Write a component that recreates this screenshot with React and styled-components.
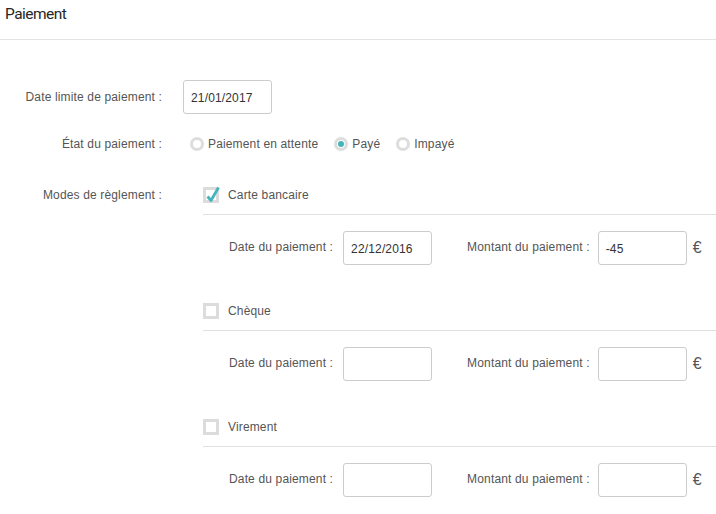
import React from "react";
import styled, { createGlobalStyle } from "styled-components";

const Global = createGlobalStyle`
  html, body { margin: 0; padding: 0; background: #fff; }
  body { font-family: "Liberation Sans", Arial, sans-serif; font-size: 12px; color: #555; letter-spacing: 0.15px; }
  * { box-sizing: border-box; }
`;

const Page = styled.div`
  width: 716px;
  height: 514px;
  overflow: hidden;
  background: #fff;
`;

const Header = styled.div`
  height: 40px;
  border-bottom: 1px solid #e3e3e3;
  padding: 5px 0 0 5px;
`;

const Title = styled.h2`
  margin: 0;
  font-family: Roboto, "Liberation Sans", sans-serif;
  font-weight: 400;
  font-size: 15.5px;
  line-height: 18px;
  color: #262626;
  letter-spacing: -0.55px;
`;

const Form = styled.div`
  padding-top: 40px;
`;

const Row = styled.div`
  display: grid;
  grid-template-columns: 162px 1fr;
  column-gap: ${(p) => p.$gap || 21}px;
  align-items: ${(p) => p.$align || "center"};
  margin-top: ${(p) => p.$mt || 0}px;
`;

const Label = styled.div`
  text-align: right;
  white-space: nowrap;
  color: #555;
  line-height: 16px;
`;

const Input = styled.input`
  width: 89px;
  height: 34px;
  border: 1px solid #ccc;
  border-radius: 3px;
  padding: 2px 0 0 7px;
  font-family: "Liberation Sans", Arial, sans-serif;
  font-size: 12px;
  letter-spacing: 0.15px;
  color: #333;
  background: #fff;
  outline: none;
`;

const RadioGroup = styled.div`
  display: flex;
  align-items: center;
  gap: 16px;
  padding-left: 7px;
`;

const RadioItem = styled.label`
  display: flex;
  align-items: center;
  gap: 4px;
  color: #555;
  line-height: 20px;
`;

const RadioCircle = styled.span`
  width: 14px;
  height: 14px;
  border-radius: 50%;
  border: 3px solid #ddd;
  display: flex;
  align-items: center;
  justify-content: center;
  &::after {
    content: "";
    width: 6px;
    height: 6px;
    border-radius: 50%;
    background: ${(p) => (p.$checked ? "#45b5bd" : "transparent")};
  }
`;

const Modes = styled.div`
  padding-left: 20px;
`;

const ModeBlock = styled.div`
  margin-top: ${(p) => p.$mt || 0}px;
`;

const ModeHead = styled.div`
  display: flex;
  align-items: center;
  gap: 9px;
  height: 16px;
  color: #555;
`;

const Box = styled.span`
  position: relative;
  width: 16px;
  height: 16px;
  border: 3px solid #dcdcdc;
  flex: none;
  svg {
    position: absolute;
    left: 0px;
    top: -4px;
  }
`;

const Divider = styled.div`
  height: 1px;
  background: #e0e0e0;
  margin-top: 11px;
`;

const Fields = styled.div`
  display: flex;
  align-items: center;
  padding: 16px 0 0 26px;
`;

const SubLabel = styled.div`
  white-space: nowrap;
  color: #555;
  margin-right: ${(p) => p.$mr}px;
  padding-bottom: 3px;
`;

const Spacer = styled.div`
  width: 35px;
`;

const Euro = styled.span`
  margin-left: 6px;
  font-size: 16px;
  color: #555;
`;

const Check = () => (
  <svg width="14" height="17" viewBox="0 0 14 17">
    <path d="M1.5 10.5 L5 14.5 L12.5 1.5" fill="none" stroke="#45b5bd" strokeWidth="2.8" strokeLinejoin="round" />
  </svg>
);

const modes = [
  { name: "Carte bancaire", checked: true, date: "22/12/2016", amount: "-45" },
  { name: "Chèque", checked: false, date: "", amount: "" },
  { name: "Virement", checked: false, date: "", amount: "" },
];

export default function App() {
  return (
    <Page>
      <Global />
      <Header>
        <Title>Paiement</Title>
      </Header>
      <Form>
        <Row>
          <Label>Date limite de paiement :</Label>
          <div><Input defaultValue="21/01/2017" /></div>
        </Row>
        <Row $mt={20} $gap={21}>
          <Label>État du paiement :</Label>
          <RadioGroup>
            <RadioItem><RadioCircle />Paiement en attente</RadioItem>
            <RadioItem><RadioCircle $checked />Payé</RadioItem>
            <RadioItem><RadioCircle />Impayé</RadioItem>
          </RadioGroup>
        </Row>
        <Row $mt={33} $align="start">
          <Label>Modes de règlement :</Label>
          <Modes>
            {modes.map((m, i) => (
              <ModeBlock key={m.name} $mt={i === 0 ? 0 : 38}>
                <ModeHead>
                  <Box>{m.checked && <Check />}</Box>
                  {m.name}
                </ModeHead>
                <Divider />
                <Fields>
                  <SubLabel $mr={10}>Date du paiement :</SubLabel>
                  <Input defaultValue={m.date} />
                  <Spacer />
                  <SubLabel $mr={8}>Montant du paiement :</SubLabel>
                  <Input defaultValue={m.amount} />
                  <Euro>€</Euro>
                </Fields>
              </ModeBlock>
            ))}
          </Modes>
        </Row>
      </Form>
    </Page>
  );
}
